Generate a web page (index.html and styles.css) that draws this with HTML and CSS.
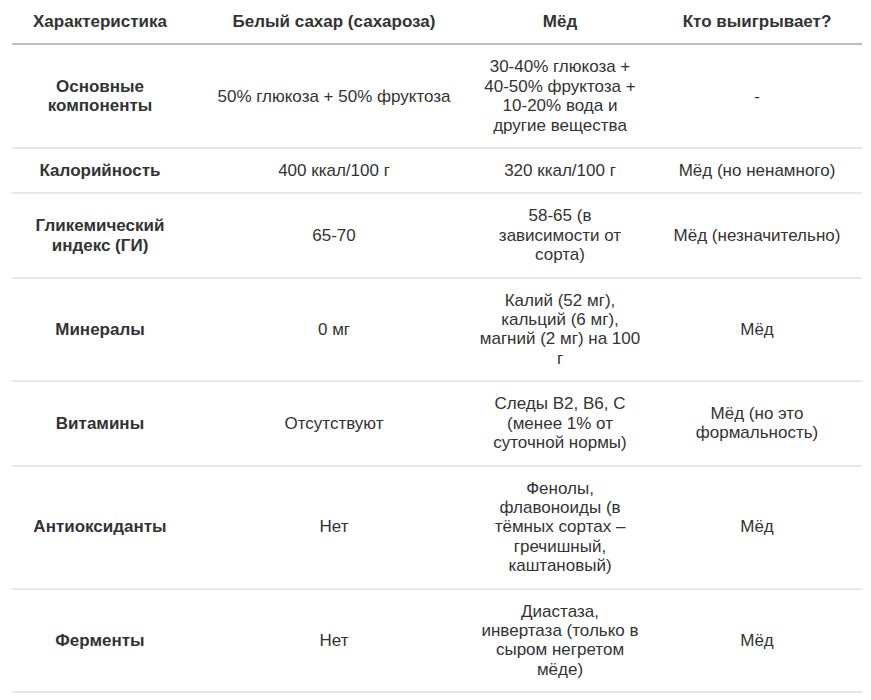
FILE: index.html
```html
<!DOCTYPE html>
<html lang="ru">
<head>
<meta charset="utf-8">
<link rel="stylesheet" href="styles.css">
</head>
<body>
<div class="wrap">
<table class="cmp">
  <colgroup>
    <col class="c1"><col class="c2"><col class="c3"><col class="c4">
  </colgroup>
  <thead>
    <tr><th>Характеристика</th><th>Белый сахар (сахароза)</th><th>Мёд</th><th>Кто выигрывает?</th></tr>
  </thead>
  <tbody>
    <tr><td class="k">Основные компоненты</td><td>50% глюкоза + 50% фруктоза</td><td>30-40% глюкоза + 40-50% фруктоза + 10-20% вода и другие вещества</td><td>-</td></tr>
    <tr><td class="k">Калорийность</td><td>400 ккал/100 г</td><td>320 ккал/100 г</td><td>Мёд (но ненамного)</td></tr>
    <tr><td class="k">Гликемический индекс (ГИ)</td><td>65-70</td><td>58-65 (в зависимости от сорта)</td><td>Мёд (незначительно)</td></tr>
    <tr><td class="k">Минералы</td><td>0 мг</td><td>Калий (52 мг), кальций (6 мг), магний (2 мг) на 100 г</td><td>Мёд</td></tr>
    <tr><td class="k">Витамины</td><td>Отсутствуют</td><td>Следы B2, B6, C (менее 1% от суточной нормы)</td><td>Мёд (но это формальность)</td></tr>
    <tr><td class="k">Антиоксиданты</td><td>Нет</td><td>Фенолы, флавоноиды (в тёмных сортах – гречишный, каштановый)</td><td>Мёд</td></tr>
    <tr><td class="k">Ферменты</td><td>Нет</td><td>Диастаза, инвертаза (только в сыром негретом мёде)</td><td>Мёд</td></tr>
  </tbody>
</table>
</div>
</body>
</html>
```
FILE: styles.css
```css
html, body {
  margin: 0;
  padding: 0;
  background: #fff;
}
.wrap {
  padding: 0 9px 0 12px;
}
.cmp {
  width: 850px;
  border-collapse: collapse;
  table-layout: fixed;
  font-family: "Liberation Sans", Arial, sans-serif;
  font-size: 17px;
  line-height: 19.4px;
  color: #333;
}
.c1 { width: 176px; }
.c2 { width: 276px; }
.c3 { width: 192px; }
.c4 { width: 206px; }
.cmp th, .cmp td {
  text-align: center;
  vertical-align: middle;
  padding: 12px 15px;
}
.cmp th:nth-child(2), .cmp td:nth-child(2) {
  padding-left: 23px;
  padding-right: 7px;
}
.cmp th:nth-child(4), .cmp td:nth-child(4) {
  padding-left: 13px;
  padding-right: 17px;
}
.cmp th {
  font-weight: bold;
  border-bottom: 2px solid #bdbdbd;
}
.cmp td {
  border-bottom: 2px solid #e8e8e8;
}
.cmp td.k {
  font-weight: bold;
}
```
